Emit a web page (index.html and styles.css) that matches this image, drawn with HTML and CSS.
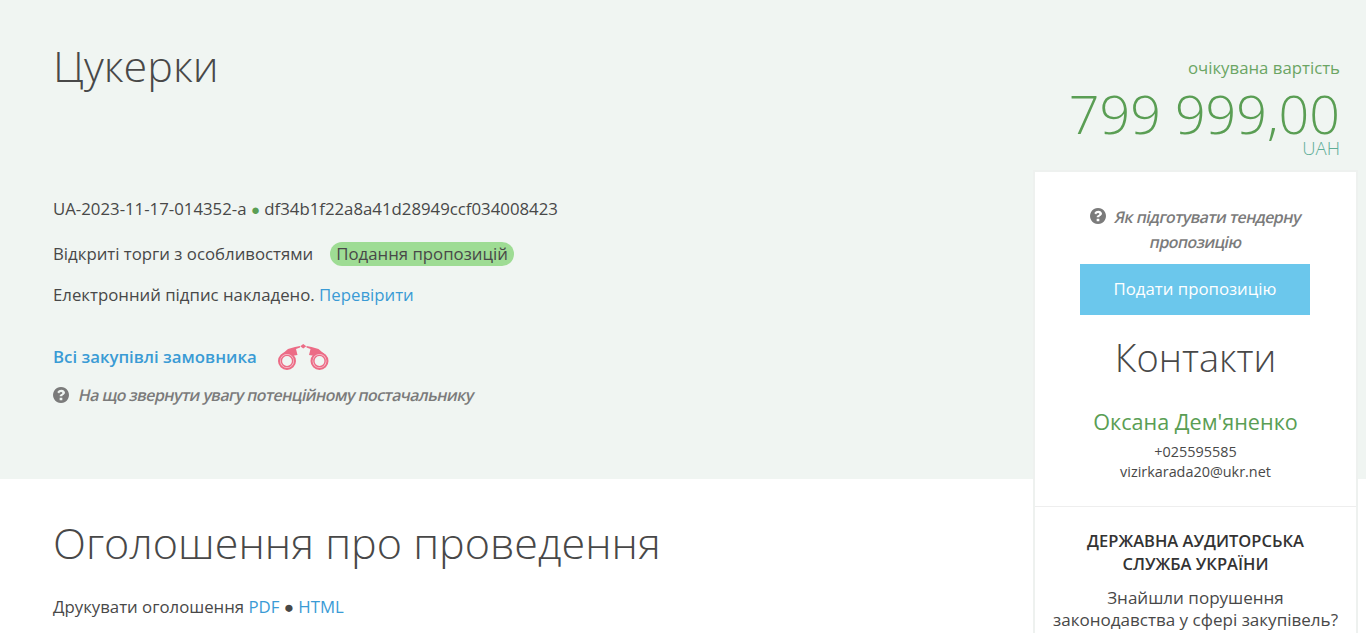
FILE: index.html
```html
<!DOCTYPE html>
<html lang="uk">
<head>
<meta charset="utf-8">
<title>Цукерки</title>
<link rel="stylesheet" href="styles.css">
</head>
<body>
<div class="page">
  <section class="hero">
    <div class="hero-top">
      <h1 class="title">Цукерки</h1>
      <div class="price">
        <div class="price-label">очікувана вартість</div>
        <div class="price-value">799 999,00</div>
        <div class="price-cur">UAH</div>
      </div>
    </div>
    <p class="line line-id">UA-2023-11-17-014352-a <span class="dot">●</span> df34b1f22a8a41d28949ccf034008423</p>
    <p class="line line-type">Відкриті торги з особливостями <span class="badge">Подання пропозицій</span></p>
    <p class="line line-sign">Електронний підпис накладено. <a class="link" href="#">Перевірити</a></p>
    <div class="buyer">
      <a class="link buyer-link" href="#">Всі закупівлі замовника</a>
      <svg class="binoculars" width="51" height="26" viewBox="0 0 51 26" fill="none">
        <path d="M25.250 0l3 2.300-3 2.300-3-2.300z" fill="#ec6c86"/>
        <path d="M3 11l7-6 7-2 5-1v1.500l-4 1.500 1.500 6-6 1zM47.500 11l-7-6-7-2-5-1v1.500l4 1.500-1.500 6 6 1z" fill="#ec6c86"/>
        <circle cx="9" cy="17" r="8" stroke="#ec6c86" stroke-width="2" fill="#f7c6d2"/>
        <circle cx="9" cy="17" r="5.600" stroke="#ec6c86" stroke-width="1.400" fill="#f0f5f2"/>
        <circle cx="41.500" cy="17" r="8" stroke="#ec6c86" stroke-width="2" fill="#f7c6d2"/>
        <circle cx="41.500" cy="17" r="5.600" stroke="#ec6c86" stroke-width="1.400" fill="#f0f5f2"/>
      </svg>
    </div>
    <a class="hint hint-hero" href="#">
      <svg class="qicon" width="16" height="16" viewBox="0 0 1536 1536"><path d="M896 1248v-192q0-14-9-23t-23-9H672q-14 0-23 9t-9 23v192q0 14 9 23t23 9h192q14 0 23-9t9-23zm256-672q0-88-55.500-163T958 297t-170-41q-243 0-371 213-15 24 8 42l132 100q7 6 19 6 16 0 25-12 53-68 86-92 34-24 86-24 48 0 85.500 26t37.500 59q0 38-20 61t-68 45q-63 28-115.500 86.500T640 826v36q0 14 9 23t23 9h192q14 0 23-9t9-23q0-19 21.500-49.500T972 763q32-18 49-28.500t46-35 44.500-48 28-60.500 12.500-81zm384 192q0 209-103 385.500T1153.500 1433 768 1536t-385.500-103T103 1153.500 0 768t103-385.500T382.500 103 768 0t385.500 103T1433 382.500 1536 768z"/></svg>
      <span class="slant">На що звернути увагу потенційному постачальнику</span>
    </a>
  </section>
  <section class="notice">
    <h2 class="notice-title">Оголошення про проведення</h2>
    <p class="line print">Друкувати оголошення <a class="link" href="#">PDF</a> <span class="print-dot">●</span> <a class="link" href="#">HTML</a></p>
  </section>
  <aside class="side">
    <div class="side-top">
      <a class="hint hint-side" href="#">
        <span class="hint-row">
          <svg class="qicon qicon-side" width="16" height="16" viewBox="0 0 1536 1536"><path d="M896 1248v-192q0-14-9-23t-23-9H672q-14 0-23 9t-9 23v192q0 14 9 23t23 9h192q14 0 23-9t9-23zm256-672q0-88-55.500-163T958 297t-170-41q-243 0-371 213-15 24 8 42l132 100q7 6 19 6 16 0 25-12 53-68 86-92 34-24 86-24 48 0 85.500 26t37.500 59q0 38-20 61t-68 45q-63 28-115.500 86.500T640 826v36q0 14 9 23t23 9h192q14 0 23-9t9-23q0-19 21.500-49.500T972 763q32-18 49-28.500t46-35 44.500-48 28-60.500 12.500-81zm384 192q0 209-103 385.500T1153.500 1433 768 1536t-385.500-103T103 1153.500 0 768t103-385.500T382.500 103 768 0t385.500 103T1433 382.500 1536 768z"/></svg>
          <span class="slant">Як підготувати тендерну</span>
        </span>
        <span class="hint-row"><span class="slant">пропозицію</span></span>
      </a>
      <a class="submit" href="#">Подати пропозицію</a>
      <h3 class="contacts">Контакти</h3>
      <div class="person">Оксана Дем'яненко</div>
      <div class="contact-lines">
        <div class="contact-line">+025595585</div>
        <div class="contact-line">vizirkarada20@ukr.net</div>
      </div>
    </div>
    <div class="side-audit">
      <div class="audit-name">ДЕРЖАВНА АУДИТОРСЬКА СЛУЖБА УКРАЇНИ</div>
      <div class="audit-text">Знайшли порушення законодавства у сфері закупівель?</div>
    </div>
  </aside>
</div>
</body>
</html>
```
FILE: styles.css
```css
* { box-sizing: border-box; }
html, body { margin: 0; height: 633px; overflow: hidden; }
body { font-family: "Open Sans", sans-serif; color: #484848; background: #fff; font-size: 16px; }
.page { position: relative; height: 633px; overflow: hidden; }
.hero { background: #f0f5f2; height: 479px; padding: 29px 26px 0 53px; }
.hero-top { display: flex; justify-content: space-between; align-items: flex-start; height: 169px; }
.title { margin: 8px 0 0; font-size: 43.100px; font-weight: 300; line-height: 57px; color: #484848; }
.price { text-align: right; color: #5a9e54; font-weight: 300; }
.price-label { font-size: 16.800px; line-height: 20px; margin-top: 29px; font-weight: 400; color: #6ba564; }
.price-value { font-size: 53.800px; line-height: 56px; margin-top: 7px; }
.price-cur { font-size: 18.500px; line-height: 20px; color: #5fae98; margin-top: -3px; }
.line { margin: 0; font-size: 16.800px; line-height: 22px; color: #484848; }
.line-id { margin-bottom: 22px; }
.dot { color: #5a9e54; font-size: 15px; vertical-align: 0; }
.print-dot { color: #484848; }
.line-type { margin-bottom: 18px; display: flex; align-items: center; gap: 17px; }
.badge { background: #9edc94; border-radius: 12px; padding: 0 6px; height: 24px; line-height: 24px; }
.link { color: #3a9bd5; text-decoration: none; }
.buyer { display: flex; align-items: center; gap: 21px; margin-top: 37px; height: 26px; }
.binoculars { position: relative; top: 1px; }
.buyer-link { font-weight: 600; font-size: 16.800px; }
.hint { color: #7b7b7b; font-weight: 600; text-decoration: none; font-size: 16px; letter-spacing: -0.6px; }
.slant { display: inline-block; transform: skewX(-12deg); }
.hint-hero { display: flex; align-items: center; gap: 10px; margin-top: 15px; line-height: 22px; }
.qicon { fill: #7b7b7b; }
.notice { padding: 34px 0 0 53px; }
.notice-title { margin: 0 0 23px; font-size: 43.100px; line-height: 60px; font-weight: 300; color: #484848; }
.side { position: absolute; left: 1033px; top: 170px; width: 325px; background: #fff; border: 2px solid #eef1ef; }
.side-top { padding: 33px 0 24px; text-align: center; border-bottom: 1px solid #eee; height: 335px; }
.hint-side { display: block; line-height: 25px; }
.hint-row { display: block; }
.qicon-side { vertical-align: -1px; margin-right: 6px; }
.submit { display: block; width: 230px; margin: 9px 0 0 45px; height: 51px; line-height: 50px; background: #6bc7ec; color: #fff; text-decoration: none; font-size: 16.800px; }
.contacts { margin: 17px 0 0; font-size: 38px; line-height: 50px; font-weight: 300; color: #484848; }
.person { margin-top: 25px; font-size: 21.600px; line-height: 30px; color: #5a9e54; }
.contact-lines { margin-top: 5px; }
.contact-line { font-size: 14.400px; line-height: 20px; color: #484848; }
.side-audit { padding: 23px 17px; text-align: center; }
.audit-name { font-weight: 600; font-size: 16.500px; line-height: 22.500px; color: #333; padding: 0 13px; }
.audit-text { margin-top: 12px; font-size: 17.050px; line-height: 22px; color: #484848; }
```
